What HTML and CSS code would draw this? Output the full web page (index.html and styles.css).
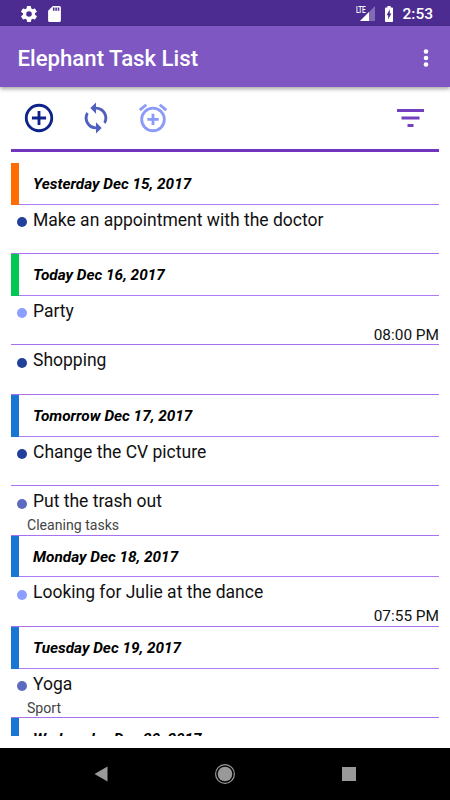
FILE: index.html
```
<!DOCTYPE html>
<html lang="en">
<head>
<meta charset="utf-8">
<title>Elephant Task List</title>
<link rel="stylesheet" href="styles.css">
</head>
<body>
    <div class="status-bar">
        <svg class="gear" viewBox="2 2 20 20"><path d="M19.4 13a7.5 7.5 0 0 0 0-2l2.1-1.6a.5.5 0 0 0 .1-.7l-2-3.4a.5.5 0 0 0-.6-.2l-2.5 1a7.3 7.3 0 0 0-1.7-1l-.4-2.6a.5.5 0 0 0-.5-.5h-4a.5.5 0 0 0-.5.4L9 5.1a7.3 7.3 0 0 0-1.7 1l-2.5-1a.5.5 0 0 0-.6.2l-2 3.4a.5.5 0 0 0 .1.7L4.5 11a7.5 7.5 0 0 0 0 2l-2.100 1.600a.5.5 0 0 0-.1.7l2 3.4c.1.2.4.3.6.2l2.500-1a7.300 7.300 0 0 0 1.700 1l.4 2.600c0 .3.2.5.5.5h4c.2 0 .5-.2.5-.5l.4-2.600a7.300 7.300 0 0 0 1.700-1l2.500 1c.2.1.5 0 .6-.2l2-3.400a.5.5 0 0 0-.1-.7zM12 15.500a3.500 3.500 0 1 1 0-7 3.500 3.500 0 0 1 0 7z"/></svg>
        <svg class="sd" viewBox="4 2 16 20"><path d="M18 2h-8L4 8v12a2 2 0 0 0 2 2h12a2 2 0 0 0 2-2V4a2 2 0 0 0-2-2zm-6 6h-2V4h2zm3 0h-2V4h2zm3 0h-2V4h2z"/></svg>
        <div class="signal">
            <span class="lte">LTE</span>
            <svg viewBox="0 0 15 15"><path opacity=".3" d="M15 0V15H0z"/><path d="M9 6V15H0z"/></svg>
        </div>
        <svg class="battery" viewBox="7 2 10 20"><path d="M15.700 4H14V2h-4v2H8.300C7.600 4 7 4.600 7 5.300v15.400c0 .7.6 1.300 1.300 1.300h7.400c.7 0 1.300-.6 1.300-1.300V5.300c0-.7-.6-1.300-1.300-1.300zM11 19v-5.500H9L13 6v5.500h2z"/></svg>
        <span class="clock">2:53</span>
    </div>
    <header class="app-bar">
        <h1>Elephant Task List</h1>
        <svg class="more" viewBox="0 0 6 18"><circle cx="3" cy="2.500" r="2.300"/><circle cx="3" cy="9" r="2.300"/><circle cx="3" cy="15.500" r="2.300"/></svg>
    </header>
    <main>
        <nav class="toolbar">
            <svg class="add" viewBox="0 0 24 24"><path d="M13 7h-2v4H7v2h4v4h2v-4h4v-2h-4zM12 2a10 10 0 1 0 0 20 10 10 0 0 0 0-20zm0 18a8 8 0 1 1 0-16 8 8 0 0 1 0 16z"/></svg>
            <svg class="sync" viewBox="0 0 24 24"><path d="M12 4V1L8 5l4 4V6a6 6 0 0 1 5.250 8.800l1.460 1.460A8 8 0 0 0 12 4zm0 14a6 6 0 0 1-5.250-8.800L5.290 7.740A8 8 0 0 0 12 20v3l4-4-4-4z"/></svg>
            <svg class="alarm" viewBox="0 0 24 24"><path d="M7.880 3.390 6.600 1.860 2 5.710l1.290 1.530zM22 5.720l-4.600-3.860-1.290 1.530 4.600 3.860zM12 4a9 9 0 1 0 0 18 9 9 0 0 0 0-18zm0 16a7 7 0 1 1 0-14 7 7 0 0 1 0 14zm1-11h-2v3H8v2h3v3h2v-3h3v-2h-3z"/></svg>
            <svg class="filter" viewBox="0 0 27 18"><path d="M0 0h27v3H0zM4.500 7.500h18v3h-18zM10.500 15h6v3h-6z"/></svg>
        </nav>
        <div class="list">
            <h2 class="day late">Yesterday Dec 15, 2017</h2>
            <div class="task high"><p>Make an appointment with the doctor</p></div>
            <h2 class="day today">Today Dec 16, 2017</h2>
            <div class="task low"><p>Party</p><time>08:00 PM</time></div>
            <div class="task high"><p>Shopping</p></div>
            <h2 class="day">Tomorrow Dec 17, 2017</h2>
            <div class="task high"><p>Change the CV picture</p></div>
            <div class="task medium"><p>Put the trash out</p><small>Cleaning tasks</small></div>
            <h2 class="day">Monday Dec 18, 2017</h2>
            <div class="task low"><p>Looking for Julie at the dance</p><time>07:55 PM</time></div>
            <h2 class="day">Tuesday Dec 19, 2017</h2>
            <div class="task medium"><p>Yoga</p><small>Sport</small></div>
            <h2 class="day">Wednesday Dec 20, 2017</h2>
        </div>
    </main>
    <footer class="nav-bar">
        <svg viewBox="0 0 20 20"><path d="M3.500 10 16.500 2.500v15z"/></svg>
        <svg viewBox="0 0 20 20"><circle cx="10" cy="10" r="7.300"/><circle class="ring" cx="10" cy="10" r="9.400"/></svg>
        <svg viewBox="0 0 20 20"><path d="M3 3h14v14H3z"/></svg>
    </footer>
</body>
</html>
```
FILE: styles.css
```
* {
    box-sizing: border-box;
}

body {
    margin: 0;
    width: 450px;
    height: 800px;
    display: flex;
    flex-direction: column;
    overflow: hidden;
    background: #fff;
    color: #111;
    font-family: Roboto, "Liberation Sans", sans-serif;
}

h1, h2, p {
    margin: 0;
}

svg {
    display: block;
    flex: none;
}

.status-bar {
    height: 26px;
    flex: none;
    display: flex;
    align-items: center;
    padding: 1px 17px 0 21px;
    background: #4d2c91;
    color: #fff;
    fill: #fff;
}

.gear {
    width: 16px;
    height: 16px;
}

.sd {
    width: 13px;
    height: 16px;
    margin-left: 11px;
}

.signal {
    display: flex;
    align-items: flex-start;
    margin-left: auto;
}

.signal svg {
    width: 15px;
    height: 15px;
    margin-left: -6px;
}

.lte {
    width: 10px;
    font-size: 9px;
    line-height: 8px;
    font-weight: 500;
    letter-spacing: -.5px;
    transform: scaleX(.72);
    transform-origin: left;
}

.battery {
    width: 10px;
    height: 16px;
    margin: 0 8px 0 9px;
}

.clock {
    font-size: 15.5px;
    line-height: 20px;
    font-weight: 500;
}

.app-bar {
    position: relative;
    height: 61px;
    flex: none;
    display: flex;
    align-items: center;
    justify-content: space-between;
    padding: 2px 21px 0 17.5px;
    background: #7e57c2;
    box-shadow: 0 2px 4px rgba(0, 0, 0, .35);
    color: #fff;
    fill: #fff;
}

.app-bar h1 {
    padding-top: 1px;
    font-size: 22.2px;
    font-weight: 500;
}

.more {
    width: 6px;
    height: 18px;
}

main {
    height: 649px;
    margin: 0 11px;
    overflow: hidden;
}

.toolbar {
    height: 65px;
    display: flex;
    align-items: center;
    padding: 0 15px 0 11px;
    border-bottom: 3px solid #6f35bd;
}

.toolbar svg {
    width: 34px;
    height: 34px;
    margin-right: 23px;
}

.add {
    fill: #0d2389;
}

.sync {
    fill: #5160bd;
}

.alarm {
    fill: #8c9bf7;
}

.toolbar .filter {
    width: 27px;
    height: 18px;
    margin: 0 0 0 auto;
    fill: #7440bf;
}

.list {
    margin-top: 11px;
}

.day {
    height: 41.5px;
    padding-left: 14px;
    border-left: 8px solid #1976d2;
    box-shadow: inset 0 -1px #ae7df5;
    color: #000;
    font-size: 15.35px;
    font-style: italic;
    font-weight: 700;
    line-height: 42px;
}

.late {
    border-left-color: #ff6d00;
}

.today {
    border-left-color: #00c853;
}

.task {
    height: 49.7px;
    display: grid;
    grid-template-columns: 16px 1fr auto;
    grid-template-rows: 31px 18px;
    padding-left: 6px;
    border-bottom: 1px solid #a970f0;
}

.task::before {
    content: "";
    width: 10px;
    height: 10px;
    margin-top: 12.3px;
    border-radius: 50%;
    background: #21409a;
}

.medium::before {
    background: #5c6bc0;
}

.low::before {
    background: #8c9eff;
}

.task p {
    grid-column: 2 / 4;
    font-size: 17.5px;
    line-height: 30px;
}

.task time {
    grid-area: 2 / 3;
    font-size: 15.4px;
    line-height: 17px;
}

.task small {
    grid-area: 2 / 1 / 3 / 3;
    padding-left: 10px;
    color: #444;
    font-size: 14.1px;
    line-height: 17px;
}

.nav-bar {
    height: 52px;
    flex: none;
    display: flex;
    justify-content: center;
    gap: 104px;
    margin-top: auto;
    padding-top: 16px;
    background: #000;
    fill: #999;
}

.nav-bar svg {
    width: 20px;
    height: 20px;
}

.ring {
    fill: none;
    stroke: #999;
    stroke-width: 1.2;
}
```
